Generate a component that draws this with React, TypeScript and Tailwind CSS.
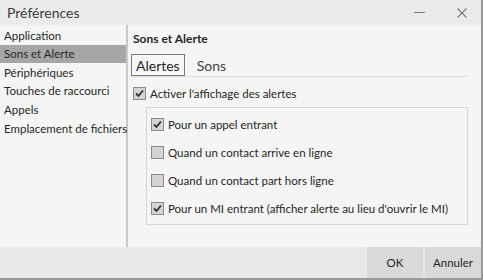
import React from "react";

function Check({ checked }: { checked: boolean }) {
  return (
    <span className="inline-flex h-[13px] w-[13px] shrink-0 items-center justify-center border border-[#8a8a8a] bg-[#d4d4d4]">
      {checked && (
        <svg width="11" height="11" viewBox="0 0 11 11">
          <path d="M2 5.5 L4.5 8 L9 2.5" fill="none" stroke="#333" strokeWidth="1.8" />
        </svg>
      )}
    </span>
  );
}

function Row({ checked, label, cls }: { checked: boolean; label: string; cls?: string }) {
  return (
    <div className={"flex items-center gap-[4px] whitespace-nowrap " + (cls || "")}>
      <Check checked={checked} />
      <span className="leading-none">{label}</span>
    </div>
  );
}

export default function App() {
  const items = [
    "Application",
    "Sons et Alerte",
    "Périphériques",
    "Touches de raccourci",
    "Appels",
    "Emplacement de fichiers",
  ];
  return (
    <div
      className="flex h-[280px] w-[483px] flex-col overflow-hidden border-r-2 border-b-2 border-[#9a9a9a] bg-[#f5f5f5] text-[11.5px] text-[#262626]"
      style={{ fontFamily: 'Lato, "Noto Sans", sans-serif' }}
    >
      <div className="flex h-[25px] shrink-0 items-center bg-[#ebebeb] pl-[7px]">
        <span className="text-[14px] text-[#3c3c3c]">Préférences</span>
        <div className="ml-auto flex items-center">
          <span className="mr-[32px] block h-[1px] w-[11px] bg-[#777]" />
          <svg width="10" height="10" viewBox="0 0 10 10" className="mr-[14px]">
            <path d="M0.5 0.5 L9.5 9.5 M9.5 0.5 L0.5 9.5" stroke="#777" strokeWidth="1.1" />
          </svg>
        </div>
      </div>
      <div className="flex flex-1">
        <div className="w-[128px] shrink-0 border-r-2 border-[#c8c8c8] pt-[1px]">
          {items.map((t, i) => (
            <div
              key={t}
              className={
                "flex h-[18.6px] items-center pl-[4px] whitespace-nowrap " +
                (i === 1 ? "bg-[#a6a6a6]" : "")
              }
            >
              {t}
            </div>
          ))}
        </div>
        <div className="flex-1 pl-[3px] pr-[13px]">
          <div className="pl-[2px] pt-[8px] text-[12px] font-bold leading-none">Sons et Alerte</div>
          <div className="mt-[9px] flex items-end border-b border-[#d8d8d8]">
            <div className="flex h-[22px] items-center border border-[#7a7a7a] bg-[#f7f7f7] px-[4px] text-[14px]">
              Alertes
            </div>
            <div className="flex h-[22px] items-center px-[12px] text-[14px] text-[#444]">Sons</div>
          </div>
          <Row checked={true} label="Activer l'affichage des alertes" cls="mt-[10px] pl-[2px]" />
          <div className="mt-[7px] ml-[15px] flex h-[118px] flex-col border border-[#d4d4d4] pl-[4px] pt-[10px]">
            <Row checked={true} label="Pour un appel entrant" />
            <Row checked={false} label="Quand un contact arrive en ligne" cls="mt-[15px]" />
            <Row checked={false} label="Quand un contact part hors ligne" cls="mt-[15px]" />
            <Row
              checked={true}
              label="Pour un MI entrant (afficher alerte au lieu d'ouvrir le MI)"
              cls="mt-[15px]"
            />
          </div>
        </div>
      </div>
      <div className="flex h-[31px] shrink-0 justify-end bg-[#e8e8e8]">
        <div className="flex w-[56px] items-center justify-center bg-[#d9d9d9]">OK</div>
        <div className="ml-[2px] flex w-[56px] items-center justify-center bg-[#d9d9d9]">Annuler</div>
      </div>
    </div>
  );
}
